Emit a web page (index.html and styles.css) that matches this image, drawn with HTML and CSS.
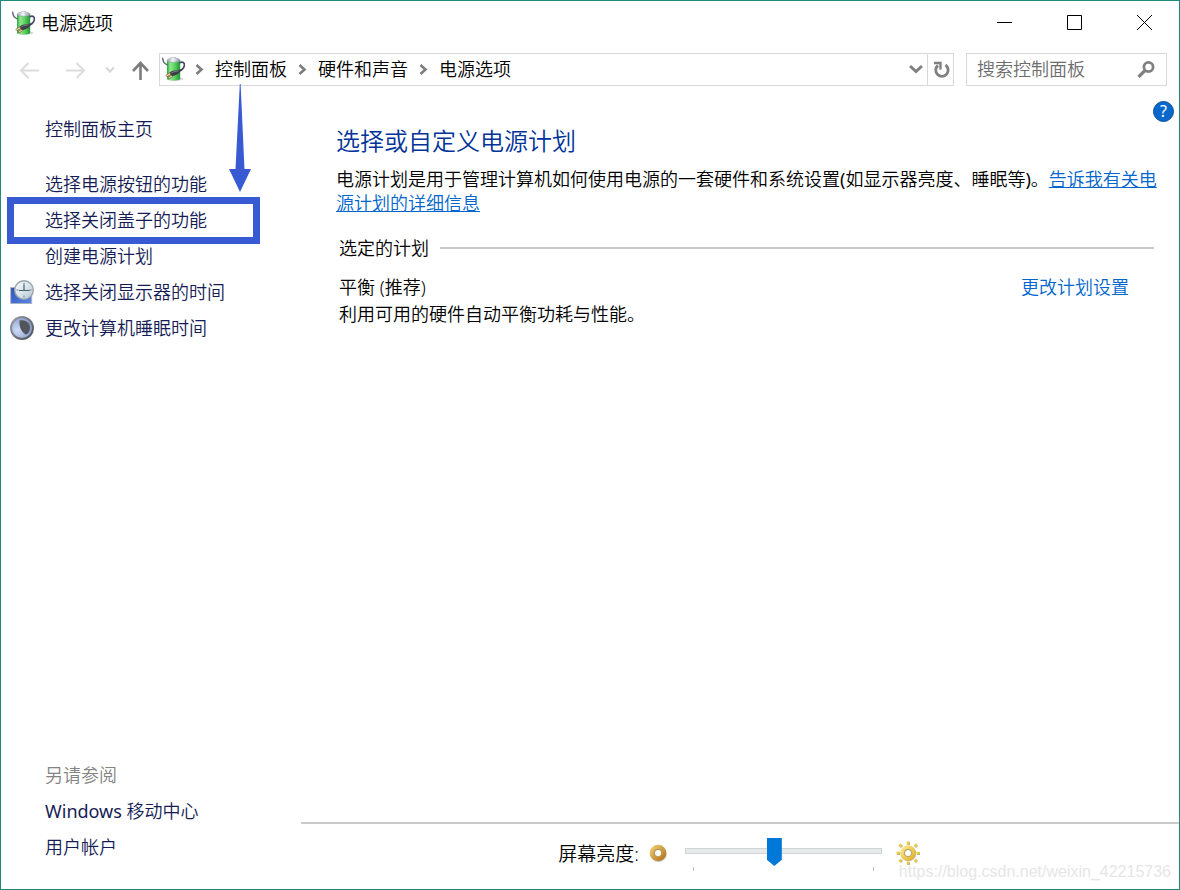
FILE: index.html
```html
<!DOCTYPE html>
<html lang="zh-CN">
<head>
<meta charset="utf-8">
<meta name="viewport" content="width=device-width, initial-scale=1">
<title>电源选项</title>
<link rel="stylesheet" href="styles.css">
</head>
<body>
<svg class="defs" aria-hidden="true">
  <defs>
    <linearGradient id="cell" x1="0" x2="1" y1="0" y2="0">
      <stop offset="0" stop-color="#2aa63c"/><stop offset=".25" stop-color="#8fe88e"/><stop offset=".6" stop-color="#5ccf5f"/><stop offset="1" stop-color="#1f9432"/>
    </linearGradient>
    <linearGradient id="cap" x1="0" x2="1" y1="0" y2="0">
      <stop offset="0" stop-color="#9aa6b0"/><stop offset=".45" stop-color="#f2f6f9"/><stop offset="1" stop-color="#84909a"/>
    </linearGradient>
    <linearGradient id="screen" x1="0" x2="1" y1="0" y2="1">
      <stop offset="0" stop-color="#2c50b4"/><stop offset="1" stop-color="#5b86ea"/>
    </linearGradient>
    <linearGradient id="dial" x1="0" x2="1" y1="0" y2="1">
      <stop offset="0" stop-color="#ffffff"/><stop offset="1" stop-color="#b4c8d4"/>
    </linearGradient>
    <linearGradient id="moonrim" x1="0" x2="1" y1="0" y2="1">
      <stop offset="0" stop-color="#9a9ea4"/><stop offset="1" stop-color="#4a4e56"/>
    </linearGradient>
    <radialGradient id="moon" cx=".3" cy=".6" r=".7">
      <stop offset="0" stop-color="#cfdcf8"/><stop offset="1" stop-color="#8597c4"/>
    </radialGradient>
    <linearGradient id="bronze" x1="0" x2="1" y1="0" y2="1">
      <stop offset="0" stop-color="#ecc86c"/><stop offset="1" stop-color="#b5791c"/>
    </linearGradient>
    <linearGradient id="gold" x1="0" x2="1" y1="0" y2="1">
      <stop offset="0" stop-color="#fbe88a"/><stop offset="1" stop-color="#dfb22c"/>
    </linearGradient>
    <symbol id="battery" viewBox="0 0 24 24">
      <ellipse cx="13" cy="22" rx="8.500" ry="1.700" fill="#b9bdc0" opacity=".6"/>
      <path d="M5 3.500v18c0 2.700 13.200 2.700 13.200 0v-18z" fill="url(#cell)"/>
      <path d="M5 3.600c0-1.500 2.500-2.200 4-2.400.5-1.500 4.800-1.500 5.300 0 1.500.2 3.900.9 3.900 2.400 0 2.200-13.200 2.200-13.200 0z" fill="url(#cap)" stroke="#8d979f" stroke-width=".5"/>
      <path d="M.7 1.300c.2 3.800 1.500 5.400 4.500 6.500" fill="none" stroke="#62637a" stroke-width="1.400" stroke-linecap="round"/>
      <path d="M17.500 5.800c3.200-1.500 5.400-.2 4.800 3-.5 2.600-2 4-4.500 5.200" fill="none" stroke="#47476a" stroke-width="1.600"/>
      <path d="M7 16.500c1.500-2 3.300-2.800 5.500-3 2.200-.1 4-.7 6.500-1.300-.8 2.800-2.300 4.600-4.500 5.600-1.800.8-3.300 1.400-5 1.400z" fill="#3b3d46"/>
      <path d="M9.500 15.600c2-.9 4-.9 7-1.900" fill="none" stroke="#8a8e98" stroke-width=".8"/>
      <path d="M3.800 18.300l4-2.500 1.200 1.500-4 2.500zM6 20.700l3.500-2.500 1.200 1.400-3.700 2.400z" fill="#f0d3a2" stroke="#6d5030" stroke-width=".6"/>
    </symbol>
    <symbol id="crumb" viewBox="0 0 31 24">
      <path d="M12.500 8l5 4.500-5 4.500" fill="none" stroke="#7d7d7d" stroke-width="2.600"/>
    </symbol>
  </defs>
</svg>
<div class="window">
  <header class="titlebar">
    <svg class="app-icon" aria-hidden="true"><use href="#battery"/></svg>
    <span class="title">电源选项</span>
    <div class="controls">
      <button class="control" aria-label="最小化"><svg width="15" height="15"><path d="M0 7.500h15" stroke="#000"/></svg></button>
      <button class="control" aria-label="最大化"><svg width="15" height="15"><path d="M.5.500h14v14H.5z" fill="none" stroke="#000"/></svg></button>
      <button class="control" aria-label="关闭"><svg width="15" height="15"><path d="M0 0l15 15M15 0L0 15" stroke="#000" stroke-width="1"/></svg></button>
    </div>
  </header>

  <nav class="navbar" aria-label="导航">
    <button class="nav-button" aria-label="后退"><svg width="22" height="18"><path d="M20 9.500H2M9.500 2L2 9.500 9.500 17" fill="none" stroke="#dcdcdc" stroke-width="2"/></svg></button>
    <button class="nav-button" aria-label="前进"><svg width="22" height="18"><path d="M1 9.500h18M11.500 2L19 9.500 11.500 17" fill="none" stroke="#dcdcdc" stroke-width="2"/></svg></button>
    <button class="nav-button narrow" aria-label="最近位置"><svg width="10" height="8"><path d="M1 1.500l4 4 4-4" fill="none" stroke="#d6d6d6" stroke-width="2"/></svg></button>
    <button class="nav-button up" aria-label="上移"><svg width="18" height="20"><path d="M9.500 20V3M2 11l7.500-8L17 11" fill="none" stroke="#7d7d7d" stroke-width="2.600"/></svg></button>
    <div class="address">
      <svg class="app-icon" aria-hidden="true"><use href="#battery"/></svg>
      <svg class="crumb" aria-hidden="true"><use href="#crumb"/></svg><a href="#">控制面板</a>
      <svg class="crumb" aria-hidden="true"><use href="#crumb"/></svg><a href="#">硬件和声音</a>
      <svg class="crumb" aria-hidden="true"><use href="#crumb"/></svg><a href="#">电源选项</a>
      <button class="drop" aria-label="展开"><svg width="14" height="10"><path d="M1 2l6 5.500L13 2" fill="none" stroke="#808080" stroke-width="3"/></svg></button>
      <button class="refresh" aria-label="刷新"><svg width="18" height="18"><path d="M13.500 4a6.200 6.200 0 1 1-7.500.3" fill="none" stroke="#808080" stroke-width="2.800"/><path d="M2 2h6.500v6.500" fill="none" stroke="#808080" stroke-width="2.400"/></svg></button>
    </div>
    <div class="search">
      <input type="text" placeholder="搜索控制面板" aria-label="搜索控制面板">
      <svg width="18" height="18" aria-hidden="true"><circle cx="11.500" cy="7" r="4.600" fill="none" stroke="#808080" stroke-width="2.800"/><path d="M8 10.500L1.500 17" stroke="#808080" stroke-width="3.200"/></svg>
    </div>
  </nav>

  <div class="body">
    <aside class="sidebar">
      <a class="home" href="#">控制面板主页</a>
      <ul class="links">
        <li><a href="#">选择电源按钮的功能</a></li>
        <li class="marked">
          <a href="#">选择关闭盖子的功能</a>
          <span class="frame"></span>
          <svg class="pointer" viewBox="0 0 22 108" aria-hidden="true"><path d="M10.800 0h.8L15.500 85H22L11 108 0 85h6.500z" fill="#385bd3"/></svg>
        </li>
        <li><a href="#">创建电源计划</a></li>
        <li>
          <svg class="link-icon" viewBox="0 0 24 24" aria-hidden="true">
            <path d="M.7 7.500h21v16H.7z" fill="url(#screen)" stroke="#a9b0c0"/>
            <circle cx="14" cy="10" r="9.300" fill="url(#dial)" stroke="#9aa5ad" stroke-width="1.400"/>
            <path d="M14 2.500v2M14 15.500v2M6.500 10h2M19.500 10h2" stroke="#6f8390"/>
            <path d="M14 4.500v6h5.500M9 10.500h5" fill="none" stroke="#456070" stroke-width="1.200"/>
          </svg>
          <a href="#">选择关闭显示器的时间</a>
        </li>
        <li>
          <svg class="link-icon" viewBox="0 0 24 24" aria-hidden="true">
            <circle cx="12" cy="12" r="11" fill="url(#moon)" stroke="url(#moonrim)" stroke-width="1.900"/>
            <path d="M9.500 4.500c6.500-1.500 11 2.500 10.500 8-.4 3.500-2 5-4 6-4-2-7-6.500-6.500-14z" fill="#53555c"/>
          </svg>
          <a href="#">更改计算机睡眠时间</a>
        </li>
      </ul>
      <div class="see-also">
        <h2>另请参阅</h2>
        <ul class="links">
          <li><a href="#"><span class="latin">Windows</span> 移动中心</a></li>
          <li><a href="#">用户帐户</a></li>
        </ul>
      </div>
    </aside>

    <main class="main">
      <button class="help" aria-label="帮助">?</button>
      <section class="content">
        <h1>选择或自定义电源计划</h1>
        <p class="intro">电源计划是用于管理计算机如何使用电源的一套硬件和系统设置<span class="latin">(</span>如显示器亮度、睡眠等<span class="latin">)</span>。<a href="#">告诉我有关电源计划的详细信息</a></p>
        <div class="group">
          <h2>选定的计划</h2>
          <div class="plan">
            <div>
              <h3>平衡 (推荐)</h3>
              <p>利用可用的硬件自动平衡功耗与性能。</p>
            </div>
            <a href="#">更改计划设置</a>
          </div>
        </div>
      </section>
      <footer class="brightness">
        <label for="level">屏幕亮度:</label>
        <svg class="dim" viewBox="0 0 18 18" aria-hidden="true"><circle cx="9.500" cy="9.700" r="6" fill="none" stroke="#888" stroke-opacity=".5" stroke-width="4.600"/><circle cx="9" cy="9" r="6" fill="none" stroke="url(#bronze)" stroke-width="4.600"/><circle cx="9" cy="9" r="3.700" fill="none" stroke="#a57a3a" stroke-width=".7"/></svg>
        <div class="slider">
          <input id="level" type="range" min="0" max="100" value="45">
          <div class="ticks"></div>
        </div>
        <svg class="bright" viewBox="0 0 24 24" aria-hidden="true">
          <path d="M12.600 1v3M12.600 21v3M1 12.600h3M21 12.600h3M4 4l2 2M19 19l2 2M4 21l2-2M19 6l2-2" stroke="#8b8148" stroke-width="2.800" opacity=".6"/>
          <path d="M12 .5v3M12 20.500v3M.5 12h3M20.500 12h3M3.300 3.300l2 2M18.700 18.700l2 2M3.300 20.700l2-2M18.700 5.300l2-2" stroke="#edca40" stroke-width="2.500"/>
          <circle cx="12.400" cy="12.500" r="5.700" fill="none" stroke="#888" stroke-opacity=".6" stroke-width="4.300"/>
          <circle cx="12" cy="12" r="5.700" fill="none" stroke="url(#gold)" stroke-width="4.200"/>
          <circle cx="12" cy="12" r="3.600" fill="none" stroke="#a8955a" stroke-width=".8"/>
        </svg>
      </footer>
    </main>
  </div>
  <div class="watermark">https://blog.csdn.net/weixin_42215736</div>
</div>
</body>
</html>
```
FILE: styles.css
```css
* { box-sizing: border-box; }

body {
  margin: 0;
  background: #fff;
  color: #000;
  font: 350 18px/24px "Noto Sans", "Noto Sans CJK SC", sans-serif;
}

h1, h2, h3, p, ul { margin: 0; padding: 0; font-weight: 350; font-size: 18px; }
ul { list-style: none; }
a { color: #0066cc; }
button { padding: 0; border: 0; background: none; font: inherit; }
svg { display: block; flex: none; }
.defs { position: absolute; width: 0; height: 0; }
.latin { font-weight: 400; }

.window {
  position: relative;
  display: flex;
  flex-direction: column;
  min-height: 100vh;
  border: 1px solid #1f8a7b;
}

.app-icon { width: 24px; height: 24px; }

.titlebar { display: flex; align-items: center; height: 43px; padding-left: 11px; }
.title { margin-left: 5px; }
.controls { display: flex; align-self: stretch; margin-left: auto; }
.control { display: grid; place-items: center; width: 70px; }

.navbar { display: flex; height: 42px; padding: 9px 12px 0 6px; }
.nav-button { display: grid; place-items: center; width: 46px; }
.nav-button.narrow { width: 22px; }
.nav-button.up { width: 38px; }
.address, .search { display: flex; align-items: center; border: 1px solid #d9d9d9; padding-bottom: 1px; }
.address { flex: 1; padding-left: 2px; }
.address a { color: #000; text-decoration: none; white-space: nowrap; }
.crumb { width: 31px; height: 24px; }
.address .app-icon { margin-right: -2px; }
.drop { display: grid; place-items: center; width: 23px; margin-left: auto; }
.refresh { display: grid; place-items: center; align-self: stretch; width: 26px; margin-bottom: -1px; border-left: 1px solid #d9d9d9; }
.search { width: 201px; margin-left: 12px; padding-left: 10px; padding-right: 11px; }
.search input { flex: 1; min-width: 0; padding: 0; border: 0; outline: 0; background: none; font: inherit; }
.search input::placeholder { color: #6d6d6d; opacity: 1; }

.body { flex: 1; display: grid; grid-template-columns: 300px 1fr; }

.sidebar { display: flex; flex-direction: column; padding: 31px 0 24px 9px; }
.sidebar a { color: #151c55; text-decoration: none; }
.home, .see-also h2 { padding-left: 35px; }
.home { margin-bottom: 25px; }
.links li { position: relative; display: flex; align-items: center; height: 36px; padding-left: 35px; }
.links li:has(.link-icon) { padding-left: 0; gap: 11px; }
.link-icon { width: 24px; height: 24px; }
.frame { position: absolute; top: -5px; left: -3px; width: 253px; height: 47px; border: 7px solid #385bd3; }
.pointer { position: absolute; bottom: 46px; left: 219px; width: 22px; height: 108px; }
.see-also { margin-top: auto; }
.see-also h2 { color: #838383; line-height: 36px; }

.main { position: relative; display: flex; flex-direction: column; }
.help {
  position: absolute;
  top: 15px;
  right: 5px;
  width: 21px;
  height: 21px;
  border: 1px solid #0a4f92;
  border-radius: 50%;
  background: #0a68cc;
  color: #fff;
  font: 400 16px/19px "Noto Sans", sans-serif;
}
.content { flex: 1; padding: 39px 12px 20px 35px; }
.content h1 { color: #003399; font-size: 24px; line-height: 32px; }
.intro { margin-top: 10px; }
.group { margin: 21px 13px 0 3px; }
.group h2 { display: flex; align-items: center; gap: 11px; }
.group h2::after { content: ""; flex: 1; height: 2px; background: #c9c9c9; }
.plan { display: flex; justify-content: space-between; margin-top: 14px; padding-right: 25px; line-height: 27px; }
.plan a { text-decoration: none; }

.brightness {
  display: flex;
  justify-content: center;
  align-items: center;
  height: 67px;
  padding: 0 2px 5px 0;
  border-top: 2px solid #c9c9c9;
}
.brightness label { font-size: 19px; }
.dim { width: 18px; height: 18px; margin: 0 18px 2px 10px; }
.bright { width: 24px; height: 24px; margin: 0 0 2px 14px; overflow: visible; }
.slider { width: 197px; }
.slider input { display: block; width: 100%; height: 28px; margin: 0; appearance: none; background: none; }
.slider input::-webkit-slider-runnable-track { height: 6px; border: 1px solid #d0d3d4; background: #e7eaea; }
.slider input::-webkit-slider-thumb {
  appearance: none;
  width: 15px;
  height: 28px;
  margin-top: -11px;
  background: #0078d7;
  clip-path: polygon(0 0, 100% 0, 100% 78%, 50% 100%, 0 78%);
}
.ticks { height: 4px; margin: 2px 8px 0; border: solid #c4c4c4; border-width: 0 1px; }

.watermark {
  position: absolute;
  right: 8px;
  bottom: 5px;
  color: #e6e6e6;
  font: 400 16px/24px "Liberation Sans", sans-serif;
  pointer-events: none;
}
```
